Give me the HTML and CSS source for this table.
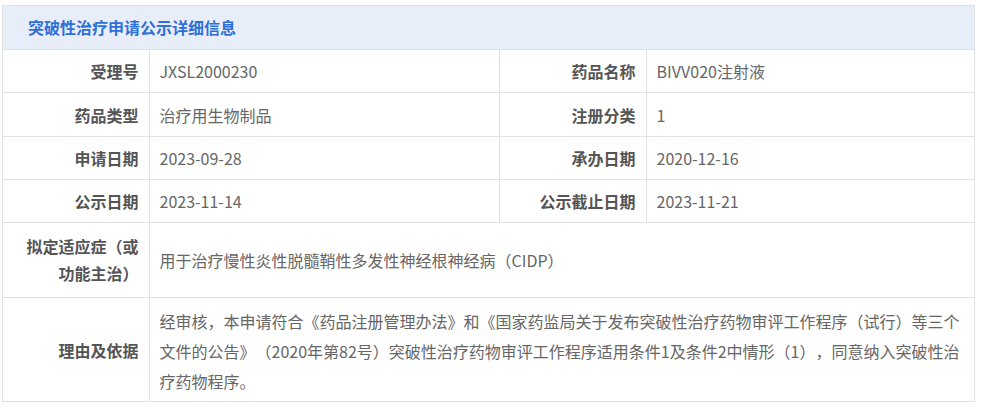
FILE: index.html
```html
<!DOCTYPE html>
<html lang="zh">
<head>
<meta charset="utf-8">
<link rel="stylesheet" href="styles.css">
</head>
<body>
<div class="panel">
  <div class="panel-head">突破性治疗申请公示详细信息</div>
  <table class="info">
    <colgroup>
      <col class="c1"><col class="c2"><col class="c3"><col class="c4">
    </colgroup>
    <tr class="row">
      <th>受理号</th><td>JXSL2000230</td>
      <th>药品名称</th><td>BIVV020注射液</td>
    </tr>
    <tr class="row row-b">
      <th>药品类型</th><td>治疗用生物制品</td>
      <th>注册分类</th><td>1</td>
    </tr>
    <tr class="row">
      <th>申请日期</th><td>2023-09-28</td>
      <th>承办日期</th><td>2020-12-16</td>
    </tr>
    <tr class="row">
      <th>公示日期</th><td>2023-11-14</td>
      <th>公示截止日期</th><td>2023-11-21</td>
    </tr>
    <tr class="row-ind">
      <th class="ind">拟定适应症（或功能主治）</th>
      <td colspan="3">用于治疗慢性炎性脱髓鞘性多发性神经根神经病（CIDP）</td>
    </tr>
    <tr class="row-reason">
      <th>理由及依据</th>
      <td colspan="3" class="reason">经审核，本申请符合《药品注册管理办法》和《国家药监局关于发布突破性治疗药物审评工作程序（试行）等三个文件的公告》（2020年第82号）突破性治疗药物审评工作程序适用条件1及条件2中情形（1），同意纳入突破性治疗药物程序。</td>
    </tr>
  </table>
</div>
</body>
</html>
```
FILE: styles.css
```css
html, body {
  margin: 0;
  padding: 0;
  background: #fff;
}
body {
  font-family: "Microsoft YaHei", "Noto Sans CJK SC", "Noto Sans", sans-serif;
  font-size: 16px;
  color: #666;
  text-spacing-trim: space-all;
}
.panel {
  margin: 5px 0 0 2px;
  width: 973px;
  border: 1px solid #e2e2e2;
  box-sizing: border-box;
}
.panel-head {
  height: 43px;
  line-height: 42px;
  background: #e8eef9;
  color: #2f70d8;
  font-weight: bold;
  font-size: 16px;
  padding-left: 25px;
  border-bottom: 1px solid #e2e2e2;
}
.info {
  width: 100%;
  border-collapse: collapse;
  table-layout: fixed;
}
.c1 { width: 146px; }
.c2 { width: 350px; }
.c3 { width: 147px; }
.c4 { width: auto; }
.info th, .info td {
  border: 1px solid #e2e2e2;
  padding: 0 10px;
  font-size: 16px;
  line-height: 22px;
  vertical-align: middle;
}
.info tr:first-child th, .info tr:first-child td { border-top: none; }
.info tr:last-child th, .info tr:last-child td { border-bottom: none; }
.info th:first-child { border-left: none; }
.info td:last-child { border-right: none; }
.info th {
  text-align: right;
  font-weight: bold;
  color: #555;
}
.info td {
  text-align: left;
  color: #666;
}
.info .row th, .info .row td { height: 42px; }
.info .row-b th, .info .row-b td { height: 43px; }
.info .row-ind th, .info .row-ind td { height: 74px; }
.info th.ind { line-height: 27px; padding-left: 18px; }
.info td.reason { line-height: 30px; padding-top: 8px; padding-bottom: 5px; padding-right: 14px; }
```
